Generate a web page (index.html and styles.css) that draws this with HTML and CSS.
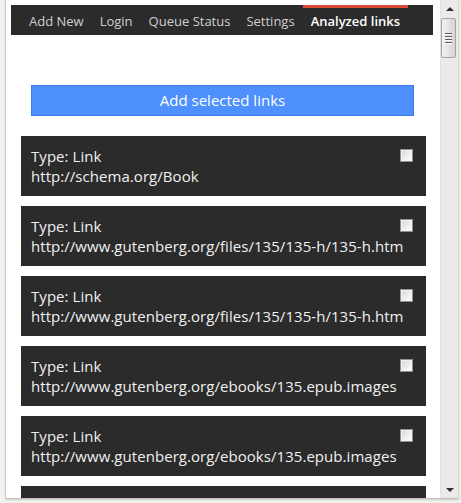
FILE: index.html
```html
<!DOCTYPE html>
<html>
<head>
<meta charset="utf-8">
<link rel="stylesheet" href="styles.css">
</head>
<body>
<div class="window">
  <div class="main">
    <nav class="nav">
      <a class="nav-item">Add New</a>
      <a class="nav-item">Login</a>
      <a class="nav-item">Queue Status</a>
      <a class="nav-item">Settings</a>
      <a class="nav-item active">Analyzed links</a>
    </nav>
    <button class="add-btn">Add selected links</button>
    <div class="card">
      <span class="check"></span>
      <div class="line">Type: Link</div>
      <div class="line">http://schema.org/Book</div>
    </div>
    <div class="card">
      <span class="check"></span>
      <div class="line">Type: Link</div>
      <div class="line">http://www.gutenberg.org/files/135/135-h/135-h.htm</div>
    </div>
    <div class="card">
      <span class="check"></span>
      <div class="line">Type: Link</div>
      <div class="line">http://www.gutenberg.org/files/135/135-h/135-h.htm</div>
    </div>
    <div class="card">
      <span class="check"></span>
      <div class="line">Type: Link</div>
      <div class="line">http://www.gutenberg.org/ebooks/135.epub.images</div>
    </div>
    <div class="card">
      <span class="check"></span>
      <div class="line">Type: Link</div>
      <div class="line">http://www.gutenberg.org/ebooks/135.epub.images</div>
    </div>
    <div class="card">
      <span class="check"></span>
    </div>
  </div>
  <div class="scrollbar">
    <div class="sb-btn"><span class="tri-up"></span></div>
    <div class="sb-thumb"><span class="grip"></span><span class="grip"></span><span class="grip"></span><span class="grip"></span></div>
    <div class="sb-track"></div>
    <div class="sb-btn"><span class="tri-down"></span></div>
  </div>
</div>
</body>
</html>
```
FILE: styles.css
```css
html, body {
  margin: 0;
  padding: 0;
  height: 100%;
  background: #f1f1ed;
  overflow: hidden;
}
body {
  padding-left: 5px;
  font-family: "Open Sans", "DejaVu Sans", sans-serif;
}
.window {
  display: flex;
  width: 452px;
  height: 498px;
  background: #fff;
  border-left: 1px solid #c9c9c9;
  border-bottom: 1px solid #bdbdbd;
  box-shadow: 1px 1px 2px rgba(0,0,0,0.15);
  overflow: hidden;
}
.main {
  width: 434px;
  flex: none;
  padding-top: 5px;
  overflow: hidden;
}
.nav {
  display: flex;
  margin-left: 5px;
  width: 412px;
  height: 30px;
  padding-left: 10px;
  background: #2b2b2b;
}
.nav-item {
  padding: 0 8px;
  height: 30px;
  line-height: 32px;
  font-size: 13px;
  color: #cfcfcf;
  box-sizing: border-box;
  white-space: nowrap;
}
.nav-item.active {
  color: #fff;
  font-weight: 600;
  border-top: 3px solid #d94a38;
  line-height: 26px;
}
.add-btn {
  display: block;
  margin: 50px 0 0 25px;
  width: 383px;
  height: 31px;
  background: #4d90fe;
  border: 1px solid #3b7de9;
  color: #fff;
  font-family: inherit;
  font-size: 15px;
  padding: 0;
  line-height: 29px;
}
.card {
  margin: 0 0 10px 15px;
  width: 385px;
  height: 40px;
  padding: 10px;
  background: #2b2b2b;
  color: #f0f0f0;
  font-size: 15px;
  line-height: 20px;
  letter-spacing: 0.05px;
  white-space: nowrap;
}
.add-btn + .card {
  margin-top: 20px;
}
.check {
  float: right;
  width: 11px;
  height: 11px;
  margin: 3px 3px 0 0;
  border: 1px solid #8e8f8f;
  background: linear-gradient(135deg, #d4d4d4 0%, #f4f4f4 70%, #fdfdfd 100%);
  box-shadow: inset 0 0 0 1px #f4f4f4;
}
.scrollbar {
  width: 17px;
  flex: none;
  display: flex;
  flex-direction: column;
  background: #eaeaea;
  border-left: 1px solid #e2e2e2;
}
.sb-btn {
  height: 17px;
  flex: none;
  display: flex;
  align-items: center;
  justify-content: center;
}
.tri-up {
  width: 0; height: 0;
  border-left: 4px solid transparent;
  border-right: 4px solid transparent;
  border-bottom: 4px solid #303030;
}
.tri-down {
  width: 0; height: 0;
  border-left: 4px solid transparent;
  border-right: 4px solid transparent;
  border-top: 4px solid #303030;
}
.sb-thumb {
  height: 38px;
  margin: 1px 2px 0 0;
  flex: none;
  border: 1px solid #a3a3a3;
  border-radius: 2px;
  background: linear-gradient(90deg, #f2f2f2 0%, #e4e4e4 50%, #d3d3d3 100%);
  display: flex;
  flex-direction: column;
  align-items: center;
  justify-content: center;
  gap: 1px;
}
.grip {
  width: 7px;
  height: 1px;
  background: #5a5a5a;
  border-bottom: 1px solid #fafafa;
}
.sb-track {
  flex: 1;
}
```
